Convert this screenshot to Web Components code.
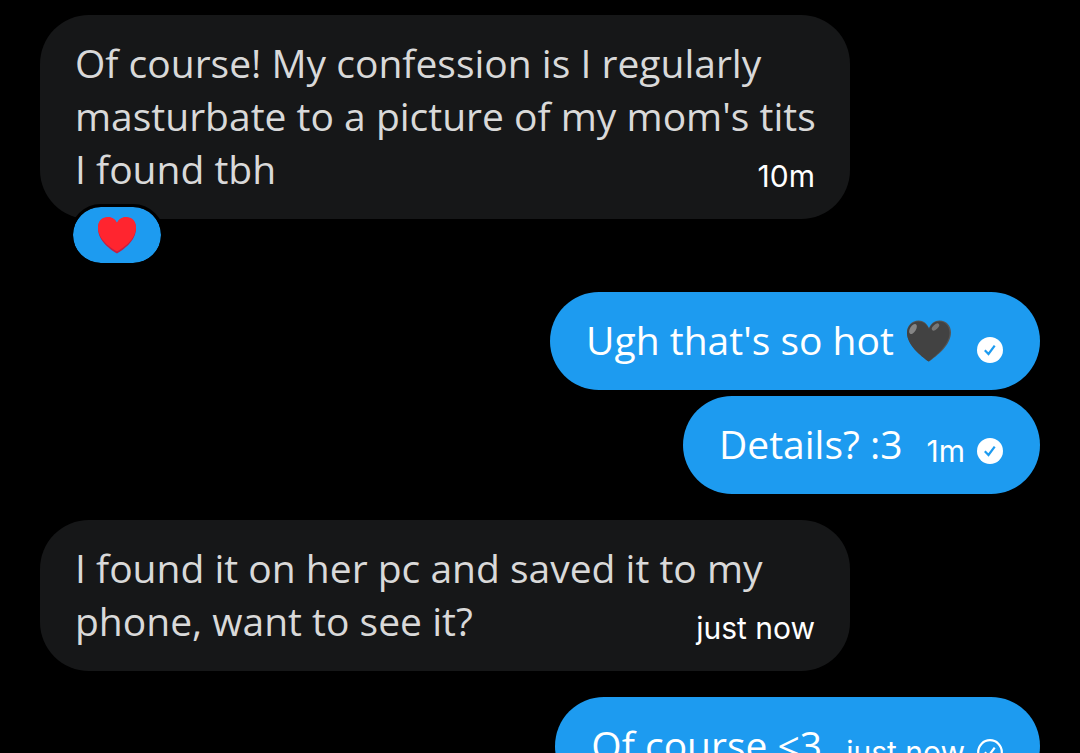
<!DOCTYPE html>
<html lang="en">
<head>
<meta charset="utf-8">
<meta name="viewport" content="width=device-width, initial-scale=1">
<title>Messages</title>
<style>
html, body { margin: 0; height: 100%; background: #000; }
body { font-family: "Open Sans", "Noto Sans", sans-serif; color: #fff; }
</style>
</head>
<body>
<chat-thread>
  <chat-message side="in" time="10m" reaction>Of course! My confession is I regularly masturbate to a picture of my mom's tits I found tbh</chat-message>
  <chat-message side="out" receipt="read">Ugh that's so hot <black-heart></black-heart></chat-message>
  <chat-message side="out" time="1m" receipt="read" grouped>Details? :3</chat-message>
  <chat-message side="in" time="just now">I found it on her pc and saved it to my phone, want to see it?</chat-message>
  <chat-message side="out" time="just now" receipt="sent">Of course &lt;3</chat-message>
</chat-thread>
<script>
class ChatElement extends HTMLElement {
  render(html) {
    const t = document.createElement('template');
    t.innerHTML = html;
    this.attachShadow({ mode: 'open' }).append(t.content.cloneNode(true));
  }
}

customElements.define('chat-thread', class extends ChatElement {
  constructor() {
    super();
    this.render(`
      <style>
        :host { display: block; box-sizing: border-box; height: 100vh; overflow: hidden; padding: 15px 40px 0; }
        main { display: flex; flex-direction: column; }
        ::slotted(*) { margin-bottom: 26px; }
        ::slotted([reaction]) { margin-bottom: 73px; }
        ::slotted([grouped]) { margin-top: -20px; }
      </style>
      <main><slot></slot></main>`);
  }
});

customElements.define('black-heart', class extends ChatElement {
  constructor() {
    super();
    this.render(`
      <style>
        :host { display: inline-block; width: 46px; height: 42px; margin: 0 1px 0 2px; vertical-align: -7px; }
        svg { display: block; }
      </style>
      <svg width="46" height="42" viewBox="0 0 46 42" role="img" aria-label="Black heart">
        <path fill="#565656" d="M23 41.500C15 36 1 25 1 12.500 1 5.500 6 .5 12.500 .5 17.500 .5 21 3.500 23 8 25 3.500 28.500 .5 33.500 .5 40.500 .5 45 5.500 45 12.500 45 25 31 36 23 41.500z"/>
        <path fill="#424242" d="M22.500 41.500C15 36 1 25 1 13 1 6.500 6 1.500 12.500 1.500 17.500 1.500 21 4.500 23 9 25 4.500 28 1.500 33 1.500 39.500 1.500 43.500 6 43.500 13 43.500 25 29.500 36 22.500 41.500z"/>
        <ellipse cx="7" cy="9" rx="3" ry="5.500" transform="rotate(32 7 9)" fill="#858585"/>
        <ellipse cx="29.500" cy="7" rx="2.300" ry="4.500" transform="rotate(48 29.500 7)" fill="#777"/>
      </svg>`);
  }
});

customElements.define('message-receipt', class extends ChatElement {
  connectedCallback() {
    if (this.shadowRoot) return;
    const read = this.getAttribute('state') === 'read';
    this.render(`
      <style>:host { display: block; width: 26px; height: 26px; } svg { display: block; }</style>
      <svg width="26" height="26" viewBox="0 0 26 26" role="img" aria-label="${read ? 'Read' : 'Sent'}" fill="none">
        ${read ? '<circle cx="13" cy="13" r="13" fill="#fff"/>' : '<circle cx="13" cy="13" r="11.800" stroke="#fff" stroke-width="2.200"/>'}
        <path d="M7.800 13.300l3.700 3.700 6.200-8.300" stroke="${read ? '#1d9bf0' : '#fff'}" stroke-width="2.200"/>
      </svg>`);
  }
});

customElements.define('message-reaction', class extends ChatElement {
  constructor() {
    super();
    this.render(`
      <style>
        :host { display: block; }
        button { display: flex; align-items: center; justify-content: center; box-sizing: border-box;
          width: 94px; height: 62px; padding: 0; border: 3px solid #000; border-radius: 31px;
          background: #1d9bf0; background-clip: padding-box; }
      </style>
      <button type="button" aria-label="Heart reaction">
        <svg width="40" height="38" viewBox="0 0 40 38" aria-hidden="true">
          <path fill="#c51f43" d="M20 37.500C14 34 1 25 1 12.500 1 5.500 5 1.500 11 1.500 15.500 1.500 18.500 4 20 7.500 21.500 4 24.500 1.500 29 1.500 35 1.500 39 5.500 39 12.500 39 25 26 34 20 37.500z"/>
          <path fill="#ff252f" d="M20 35.500C14 32 1 23.500 1 11.500 1 5 5 1 11 1 15.500 1 18.500 3.500 20 7 21.500 3.500 24.500 1 29 1 35 1 39 5 39 11.500 39 23.500 26 32 20 35.500z"/>
        </svg>
      </button>`);
  }
});

customElements.define('chat-message', class extends ChatElement {
  connectedCallback() {
    if (this.shadowRoot) return;
    const time = this.getAttribute('time');
    const receipt = this.getAttribute('receipt');
    this.render(`
      <style>
        :host { display: block; position: relative; max-width: 81%; }
        :host([side="in"]) { align-self: flex-start; color: #d9d9d9; }
        :host([side="out"]) { align-self: flex-end; color: #fff; }
        article { box-sizing: border-box; padding: 21px 36px 24px; border-radius: 49px; font-size: 39px; line-height: 53px; }
        :host([side="in"]) article { display: grid; padding-right: 24px; padding-left: 35px; background: #161718; }
        :host([side="in"]) p, :host([side="in"]) footer { grid-area: 1 / 1; }
        :host([side="in"]) footer { margin-right: 11px; }
        :host([side="out"]) article { display: flex; gap: 24px; padding-right: 37px; background: #1d9bf0; }
        p { margin: 0; }
        footer { display: flex; align-items: center; gap: 12px; align-self: end; justify-self: end;
          height: 38px; font: 30px/40px Inter, "Open Sans", sans-serif; color: #fff; white-space: nowrap; }
        :host(:not([time])) footer { height: 32px; }
        message-reaction { position: absolute; left: 30px; bottom: -47px; }
      </style>
      <article>
        <p><slot></slot></p>
        <footer>${time ? `<time>${time}</time>` : ''}${receipt ? `<message-receipt state="${receipt}"></message-receipt>` : ''}</footer>
      </article>
      ${this.hasAttribute('reaction') ? '<message-reaction></message-reaction>' : ''}`);
  }
});
</script>
</body>
</html>
